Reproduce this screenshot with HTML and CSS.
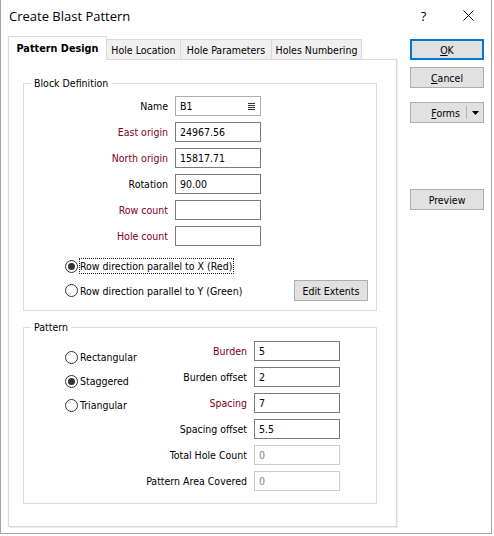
FILE: index.html
```html
<!DOCTYPE html>
<html>
<head>
<meta charset="utf-8">
<title>Create Blast Pattern</title>
<link rel="stylesheet" href="styles.css">
</head>
<body>
<div class="window">
  <div class="titlebar">
    <div class="title">Create Blast Pattern</div>
    <div class="caption-btn help">?</div>
    <div class="caption-btn close">
      <svg width="11" height="11" viewBox="0 0 11 11"><path d="M0.5 0.5L10.5 10.5M10.5 0.5L0.5 10.5" stroke="#000" stroke-width="1" fill="none"/></svg>
    </div>
  </div>
  <div class="content">
    <div class="tabs-area">
      <div class="tabstrip">
        <div class="tab active t1">Pattern Design</div>
        <div class="tab t2">Hole Location</div>
        <div class="tab t3">Hole Parameters</div>
        <div class="tab t4">Holes Numbering</div>
      </div>
      <div class="panel">
        <fieldset class="group block">
          <legend>Block Definition</legend>
          <div class="rows">
            <div class="row"><span class="lbl">Name</span><div class="field name"><span>B1</span><svg class="list-icon" width="7" height="7" viewBox="0 0 7 7"><path d="M0 0.5H7M0 2.5H7M0 4.5H7M0 6.5H7" stroke="#333" stroke-width="1"/></svg></div></div>
            <div class="row"><span class="lbl req">East origin</span><div class="field">24967.56</div></div>
            <div class="row"><span class="lbl req">North origin</span><div class="field">15817.71</div></div>
            <div class="row"><span class="lbl">Rotation</span><div class="field">90.00</div></div>
            <div class="row"><span class="lbl req">Row count</span><div class="field"></div></div>
            <div class="row"><span class="lbl req">Hole count</span><div class="field"></div></div>
          </div>
          <div class="radio-row dir-x"><span class="radio on"></span><span class="rtext focus">Row direction parallel to X (Red)</span></div>
          <div class="radio-row dir-y"><span class="radio"></span><span class="rtext">Row direction parallel to Y (Green)</span><div class="btn extents">Edit Extents</div></div>
        </fieldset>
        <fieldset class="group pattern">
          <legend>Pattern</legend>
          <div class="pattern-body">
            <div class="pattern-radios">
              <div class="radio-row"><span class="radio"></span><span class="rtext">Rectangular</span></div>
              <div class="radio-row"><span class="radio on"></span><span class="rtext">Staggered</span></div>
              <div class="radio-row"><span class="radio"></span><span class="rtext">Triangular</span></div>
            </div>
            <div class="rows">
              <div class="row"><span class="lbl req">Burden</span><div class="field">5</div></div>
              <div class="row"><span class="lbl">Burden offset</span><div class="field">2</div></div>
              <div class="row"><span class="lbl req">Spacing</span><div class="field">7</div></div>
              <div class="row"><span class="lbl">Spacing offset</span><div class="field">5.5</div></div>
              <div class="row"><span class="lbl">Total Hole Count</span><div class="field disabled">0</div></div>
              <div class="row"><span class="lbl">Pattern Area Covered</span><div class="field disabled">0</div></div>
            </div>
          </div>
        </fieldset>
      </div>
    </div>
    <div class="side">
      <div class="btn ok"><span><u>O</u>K</span></div>
      <div class="btn cancel"><span><u>C</u>ancel</span></div>
      <div class="btn forms"><span class="forms-label"><u>F</u>orms</span><span class="sep"></span><span class="arrow"><svg width="7" height="4" viewBox="0 0 7 4"><polygon points="0,0 7,0 3.5,4" fill="#000"/></svg></span></div>
      <div class="btn preview"><span>Preview</span></div>
    </div>
  </div>
</div>
</body>
</html>
```
FILE: styles.css
```css
body {
  margin: 0;
  background: #fff;
  font-family: "DejaVu Sans Condensed", "DejaVu Sans", sans-serif;
  font-size: 10.5px;
  color: #000;
}

.window {
  width: 492px;
  height: 534px;
  box-sizing: border-box;
  border: 1px solid #a5a5a5;
  border-top: none;
  background: #fff;
  display: flex;
  flex-direction: column;
}

.titlebar {
  height: 31px;
  flex-shrink: 0;
  display: flex;
  align-items: center;
}

.title {
  flex: 1;
  padding-left: 8px;
  font-family: "Open Sans", sans-serif;
  font-size: 13px;
  color: #000;
}

.caption-btn {
  width: 46px;
  height: 31px;
  display: flex;
  align-items: center;
  justify-content: center;
}

.help {
  font-family: "Open Sans", sans-serif;
  font-size: 13px;
  padding-left: 3px;
  box-sizing: border-box;
}

.content {
  display: flex;
  padding: 5px 0 0 7px;
}

.tabs-area {
  width: 389px;
}

.tabstrip {
  display: flex;
  align-items: flex-end;
  height: 23px;
}

.tab {
  height: 20px;
  box-sizing: border-box;
  border-top: 1px solid #d9d9d9;
  border-right: 1px solid #d9d9d9;
  background: #f0f0f0;
  display: flex;
  align-items: center;
  justify-content: center;
  white-space: nowrap;
}

.tab.active {
  height: 24px;
  margin-bottom: -1px;
  position: relative;
  z-index: 1;
  background: #fff;
  border-left: 1px solid #d9d9d9;
  font-weight: bold;
  font-size: 10.8px;
  padding-bottom: 1px;
}

.t1 { width: 99px; }
.t2 { width: 74px; }
.t3 { width: 91px; }
.t4 { width: 90px; }

.panel {
  height: 468px;
  box-sizing: border-box;
  border: 1px solid #d9d9d9;
  box-shadow: 1px 1px 0 #ececec;
  padding: 16px 19px 0 14px;
  background: #fff;
}

.group {
  margin: 0;
  border: 1px solid #dcdcdc;
  min-width: 0;
}

legend {
  margin-left: 7px;
  padding: 0 3px;
  line-height: 14px;
}

.block {
  padding: 6px 8px 9px 0;
}

.pattern {
  margin-top: 9px;
  padding: 7px 36px 12px 0;
}

.rows {
  display: flex;
  flex-direction: column;
  gap: 6px;
}

.row {
  display: flex;
  align-items: center;
  gap: 7px;
  height: 20px;
}

.lbl {
  text-align: right;
  white-space: nowrap;
  flex-shrink: 0;
}

.block .lbl { width: 144px; }
.pattern .lbl { width: 117px; }

.req { color: #800020; }

.field {
  width: 86px;
  height: 20px;
  box-sizing: border-box;
  border: 1px solid #7a7a7a;
  padding: 0 4px;
  display: flex;
  align-items: center;
  background: #fff;
  flex-shrink: 0;
}

.field.name {
  border-color: #adadad;
  justify-content: space-between;
  padding-right: 5px;
}

.field.disabled {
  border-color: #cccccc;
  color: #8282a0;
}

.radio-row {
  display: flex;
  align-items: center;
  gap: 1px;
  padding-left: 41px;
}

.radio {
  width: 13px;
  height: 13px;
  box-sizing: border-box;
  border: 1px solid #333;
  border-radius: 50%;
  background: #fff;
  display: flex;
  align-items: center;
  justify-content: center;
  flex-shrink: 0;
}

.radio.on::after {
  content: "";
  width: 7px;
  height: 7px;
  border-radius: 50%;
  background: #333;
}

.rtext {
  border: 1px dotted transparent;
  padding: 0 1px 0 0;
  line-height: 14px;
  white-space: nowrap;
}

.rtext.focus {
  border-color: #222;
}

.dir-x {
  margin-top: 12px;
  height: 16px;
}

.dir-y {
  margin-top: 6px;
  height: 21px;
}

.pattern-body {
  display: flex;
}

.pattern-radios {
  flex: 1;
  min-width: 0;
  display: flex;
  flex-direction: column;
  gap: 8px;
  padding-top: 8px;
}

.pattern-radios .radio-row {
  height: 16px;
}

.btn {
  height: 21px;
  box-sizing: border-box;
  border: 1px solid #adadad;
  background: #e1e1e1;
  display: flex;
  align-items: center;
  justify-content: center;
  white-space: nowrap;
}

.extents {
  width: 74px;
  margin-left: auto;
}

.side {
  width: 74px;
  margin-left: 13px;
  padding-top: 3px;
  display: flex;
  flex-direction: column;
}

.ok {
  border: 2px solid #0078d7;
}

.cancel { margin-top: 7px; }

.forms {
  margin-top: 14px;
  justify-content: flex-end;
}

.forms-label {
  padding-right: 6px;
}

.sep {
  width: 1px;
  height: 13px;
  background: #b4b4b4;
}

.arrow {
  width: 16px;
  display: flex;
  align-items: center;
  justify-content: center;
}

.preview { margin-top: 66px; }
```
